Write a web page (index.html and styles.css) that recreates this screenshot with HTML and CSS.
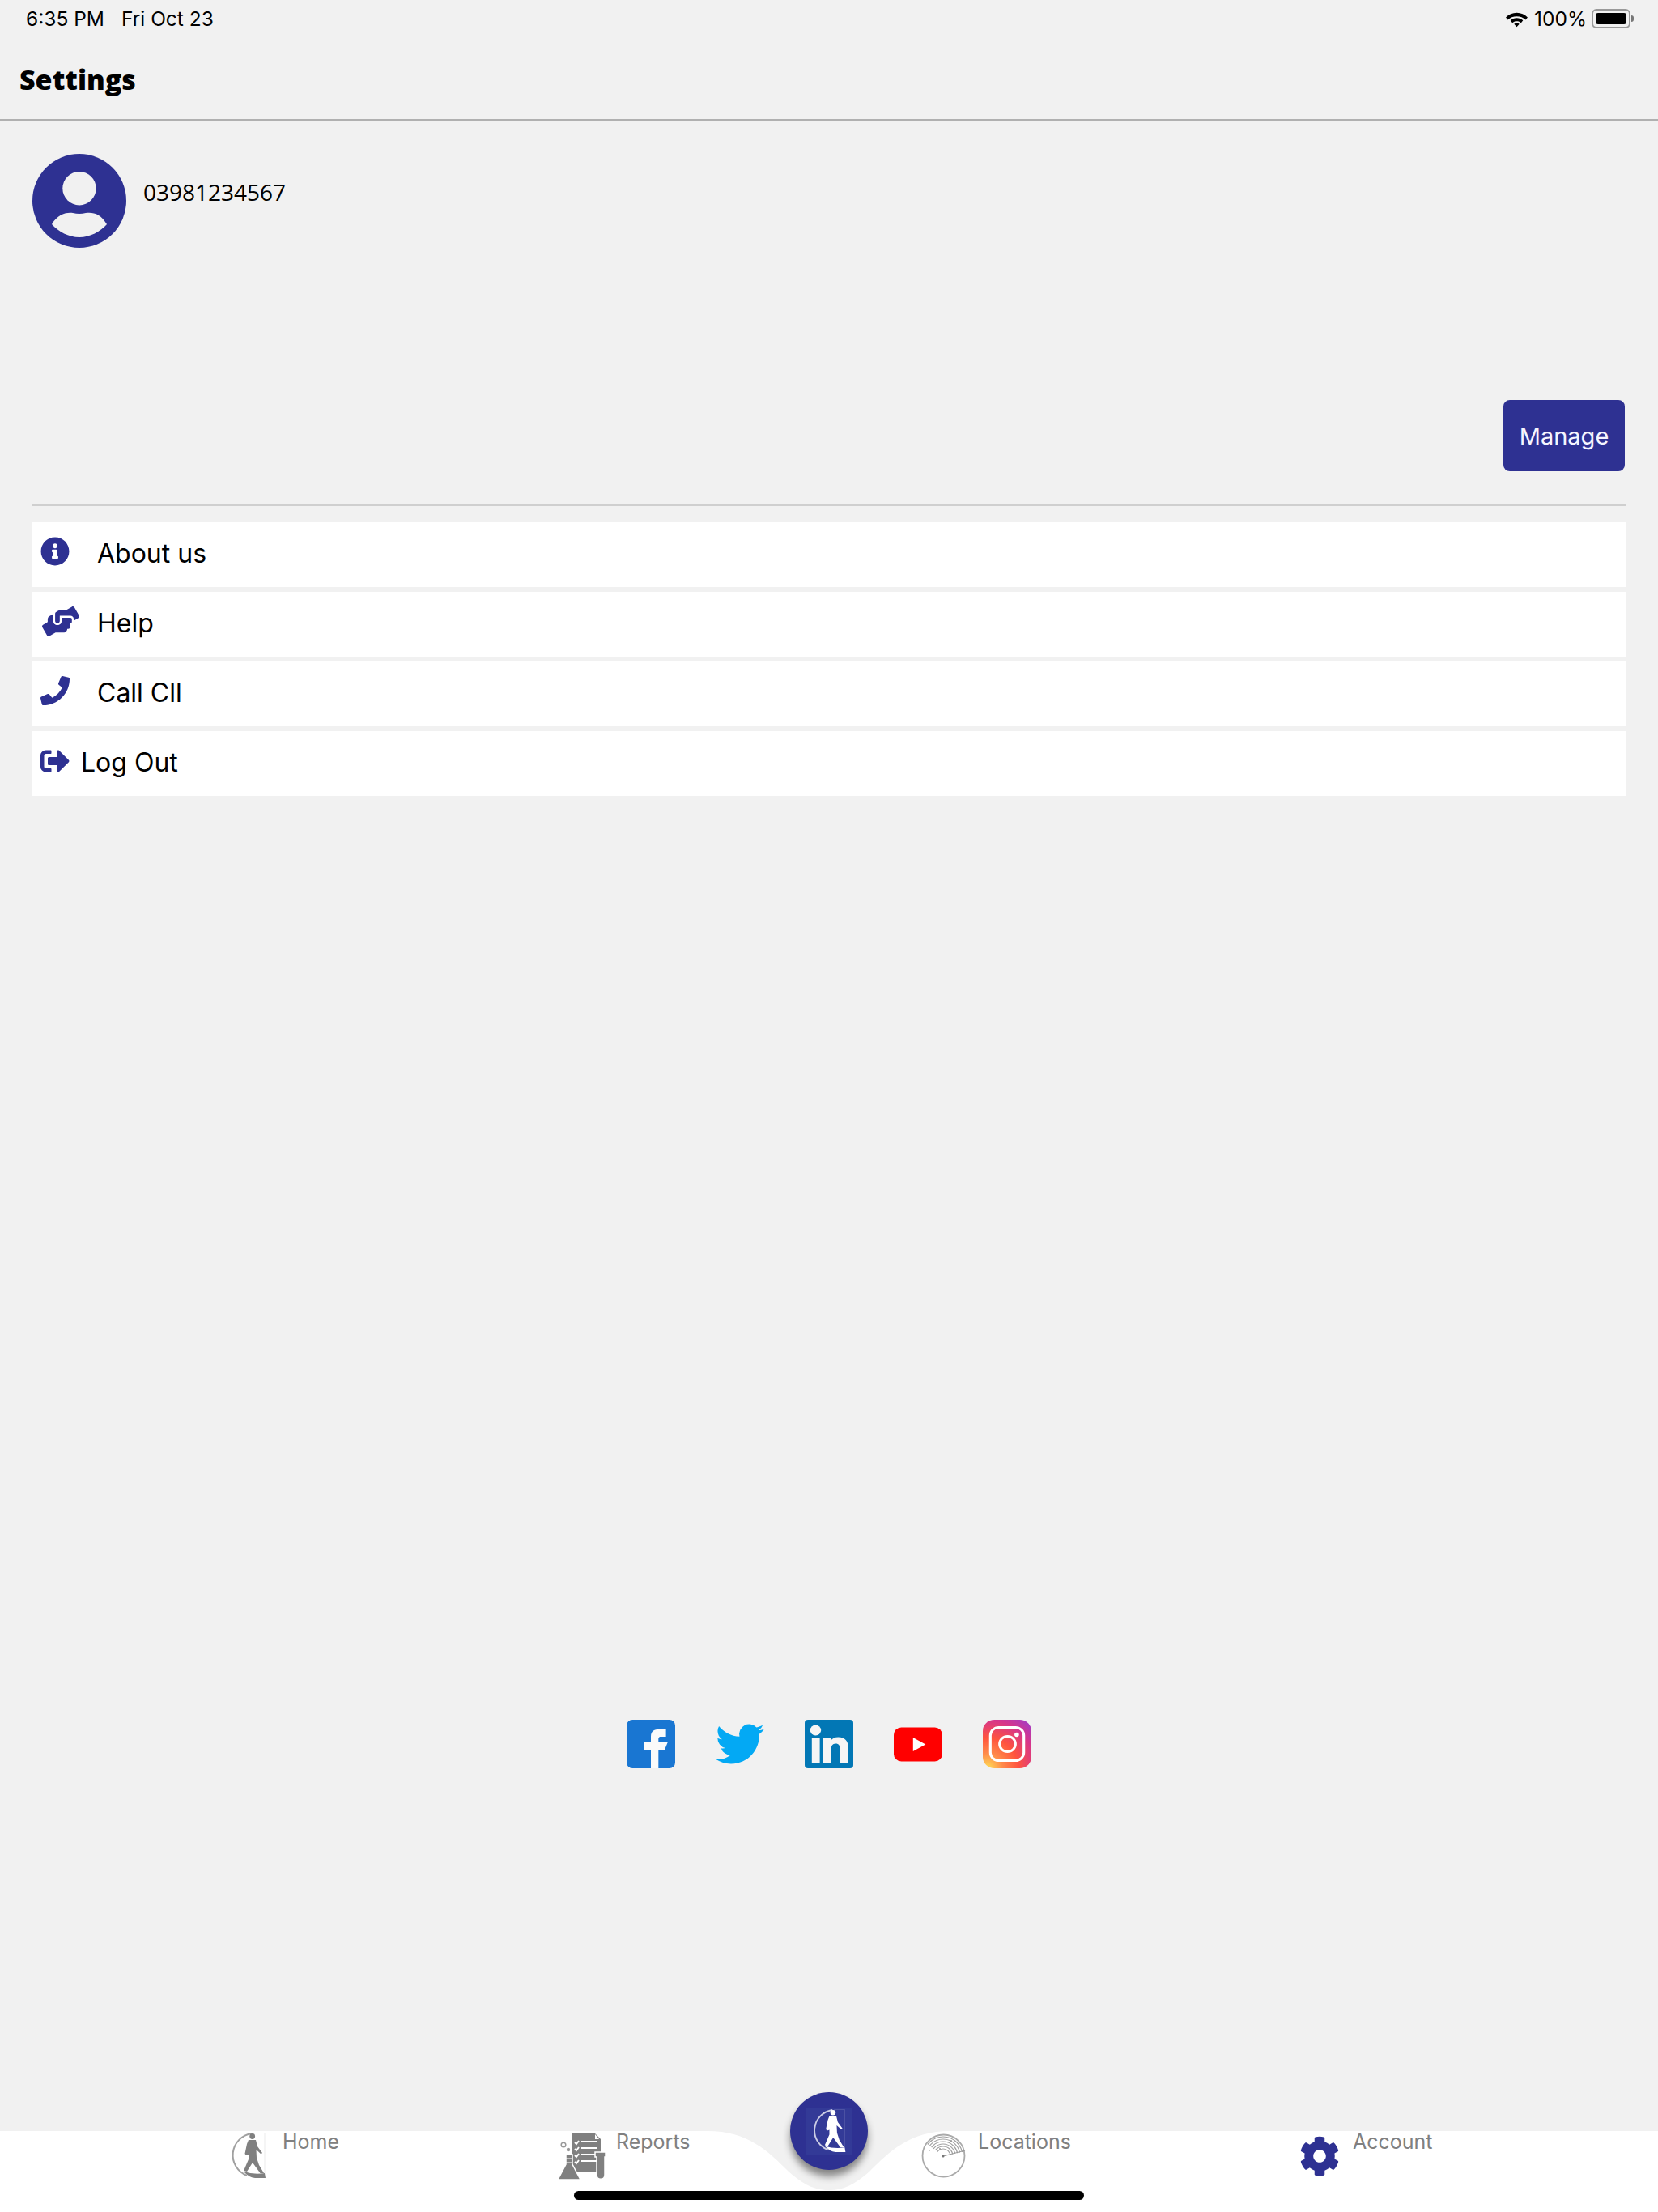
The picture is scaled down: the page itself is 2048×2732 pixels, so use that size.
FILE: index.html
```html
<!DOCTYPE html>
<html lang="en">
<head>
    <meta charset="UTF-8">
    <meta name="viewport" content="width=device-width, initial-scale=1.0">
    <title>Settings</title>
    <link rel="stylesheet" href="styles.css">
</head>
<body>
    <!-- walker logo, used in the tab bar and the round button -->
    <svg class="defs" width="0" height="0">
        <symbol id="walker" viewBox="0 0 43 57">
            <path d="M28 .5 H42 V50" fill="none" stroke="currentColor" stroke-opacity="0.15" stroke-width="1"/>
            <path d="M26 1 A27 27 0 0 0 20 53" fill="none" stroke="currentColor" stroke-opacity="0.75" stroke-width="2"/>
            <circle cx="26.700" cy="4.500" r="3.400" fill="currentColor"/>
            <path fill="currentColor" d="M22 9 L31 9 L33 17 L39 25 L37.500 26.500 L31.500 21 L32 31 L35 40 L41 50 L36.500 50 L27 37 L20 48 L16 47 L22 33 L22 27 L19 28 L17.500 26 L20 14 Z"/>
            <path fill="currentColor" d="M16 48 Q28 52 42 50 L43 56 L30 56 Q22 55 16 48 Z"/>
        </symbol>
    </svg>

    <div class="status-bar">
        <div class="status-left"><span>6:35 PM</span><span>Fri Oct 23</span></div>
        <div class="status-right">
            <svg class="wifi" viewBox="0 0 28 20"><path d="M14 2.500 C19 2.500 23.500 4.500 27 8 L24.600 11 C22 8.200 18 6.800 14 6.800 C10 6.800 6 8.200 3.400 11 L1 8 C4.500 4.500 9 2.500 14 2.500 Z M14 8.800 C16.800 8.800 19.500 9.800 21.500 11.800 L19.200 14.600 C17.800 13.200 16 12.600 14 12.600 C12 12.600 10.200 13.200 8.800 14.600 L6.500 11.800 C8.500 9.800 11.200 8.800 14 8.800 Z M14 14.800 C15.200 14.800 16.300 15.200 17.100 16 L14 19.500 L10.900 16 C11.700 15.200 12.800 14.800 14 14.800 Z"/></svg>
            <span>100%</span>
            <div class="battery"><div class="battery-fill"></div></div>
            <div class="battery-cap"></div>
        </div>
    </div>

    <header class="page-header">
        <h1>Settings</h1>
    </header>

    <main class="content">
        <div class="profile">
            <svg class="avatar" viewBox="0 0 116 116">
                <circle cx="58" cy="58" r="58" fill="#2e3192"/>
                <circle cx="58" cy="42.700" r="20.700" fill="#f1f1f1"/>
                <path fill="#f1f1f1" d="M24 87 C32 73 44 72 50 73 Q58 75 66 73 C76 72 84 74 92 87 C84 96 71 103 58 103 C45 103 32 96 24 87 Z"/>
            </svg>
            <div class="phone">03981234567</div>
        </div>
        <div class="manage-row">
            <button class="manage">Manage</button>
        </div>
        <div class="menu">
            <div class="menu-row">
                <div class="menu-icon">
                    <svg class="icon-info" viewBox="0 0 512 512"><path d="M256 8C119.043 8 8 119.083 8 256c0 136.997 111.043 248 248 248s248-111.003 248-248C504 119.083 392.957 8 256 8zm0 110c23.196 0 42 18.804 42 42s-18.804 42-42 42-42-18.804-42-42 18.804-42 42-42zm56 254c0 6.627-5.373 12-12 12h-88c-6.627 0-12-5.373-12-12v-24c0-6.627 5.373-12 12-12h12v-64h-12c-6.627 0-12-5.373-12-12v-24c0-6.627 5.373-12 12-12h64c6.627 0 12 5.373 12 12v100h12c6.627 0 12 5.373 12 12v24z"/></svg>
                </div>
                <span>About us</span>
            </div>
            <div class="menu-row">
                <div class="menu-icon">
                    <svg class="icon-help" viewBox="0 0 640 512"><path d="M488 192H336v56c0 39.700-32.300 72-72 72s-72-32.300-72-72V126.400l-64.900 39C107.800 176.900 96 197.800 96 220.200v47.300l-80 46.200C.7 322.500-4.600 342.100 4.300 357.400l80 138.600c8.800 15.300 28.400 20.500 43.700 11.700L231.400 448H368c35.300 0 64-28.700 64-64h16c17.700 0 32-14.300 32-32v-64h8c13.300 0 24-10.700 24-24v-48c0-13.300-10.700-24-24-24zm147.700-37.400L555.700 16C546.900.7 527.300-4.500 512 4.300L408.600 64H306.400c-12 0-23.700 3.400-34 9.700l-33.500 20.900c-9.400 5.900-15 16.200-15 27.300V248c0 22.100 17.900 40 40 40s40-17.900 40-40v-88h184c30.900 0 56 25.100 56 56v28.500l80-46.200c15.300-8.900 20.500-28.400 11.700-43.700z"/></svg>
                </div>
                <span>Help</span>
            </div>
            <div class="menu-row">
                <div class="menu-icon">
                    <svg class="icon-call" viewBox="0 0 512 512"><path d="M493.400 24.600l-104-24c-11.300-2.600-22.900 3.300-27.500 13.900l-48 112c-4.200 9.800-1.400 21.300 6.900 28l60.600 49.600c-36 76.700-98.900 140.500-177.200 177.200l-49.600-60.600c-6.800-8.300-18.200-11.100-28-6.900l-112 48C3.900 366.500-2 378.100.6 389.400l24 104C27.100 504.200 36.700 512 48 512c256.100 0 464-207.500 464-464 0-11.200-7.700-20.900-18.600-23.400z"/></svg>
                </div>
                <span>Call Cll</span>
            </div>
            <div class="menu-row">
                <div class="menu-icon menu-icon-short">
                    <svg class="icon-logout" viewBox="0 0 512 512"><path d="M497 273L329 441c-15 15-41 4.500-41-17v-96H152c-13.300 0-24-10.700-24-24v-96c0-13.300 10.700-24 24-24h136V88c0-21.400 25.900-32 41-17l168 168c9.300 9.400 9.300 24.600 0 34zM192 436v-40c0-6.600-5.400-12-12-12H96c-17.700 0-32-14.300-32-32V160c0-17.700 14.300-32 32-32h84c6.600 0 12-5.400 12-12V76c0-6.600-5.400-12-12-12H96c-53 0-96 43-96 96v192c0 53 43 96 96 96h84c6.600 0 12-5.400 12-12z"/></svg>
                </div>
                <span>Log Out</span>
            </div>
        </div>

        <div class="social">
            <svg class="social-icon" viewBox="0 0 58 60" preserveAspectRatio="none">
                <rect width="58" height="60" rx="7" fill="#1976d2"/>
                <path fill="#fafafa" d="M29 60 V38 H21 V28 H29 V21 C29 13 34 12 38 12 H47 V21 H41 C38 21 38 23 38 25 V28 H49 L45 38 H38 V60 Z"/>
            </svg>
            <svg class="social-icon" viewBox="0 0 24 24">
                <path fill="#03a9f4" d="M23.953 4.570a10 10 0 01-2.825.775 4.958 4.958 0 002.163-2.723c-.951.555-2.005.959-3.127 1.184a4.920 4.920 0 00-8.384 4.482C7.690 8.095 4.067 6.130 1.640 3.162a4.822 4.822 0 00-.666 2.475c0 1.710.870 3.213 2.188 4.096a4.904 4.904 0 01-2.228-.616v.060a4.923 4.923 0 003.946 4.827 4.996 4.996 0 01-2.212.085 4.936 4.936 0 004.604 3.417 9.867 9.867 0 01-6.102 2.105c-.390 0-.779-.023-1.170-.067a13.995 13.995 0 007.557 2.209c9.053 0 13.998-7.496 13.998-13.985 0-.210 0-.420-.015-.630A9.935 9.935 0 0024 4.590z"/>
            </svg>
            <svg class="social-icon" viewBox="0 0 58 60" preserveAspectRatio="none">
                <rect width="58" height="60" rx="4" fill="#0277b5"/>
                <circle cx="13" cy="13" r="6.500" fill="#f5f5f5"/>
                <rect x="8.500" y="22" width="9.500" height="32" rx="1" fill="#f5f5f5"/>
                <path fill="#f5f5f5" d="M22 22 H31 V26 C33 23 36 21.500 40 21.500 C48 21.500 52 26 52 35 V54 H42.500 V37 C42.500 32 40.500 29.500 37 29.500 C33 29.500 31.500 32.500 31.500 37 V54 H22 Z"/>
            </svg>
            <svg class="social-icon" viewBox="0 0 58 60" preserveAspectRatio="none">
                <rect x="0" y="9.500" width="58" height="42" rx="9" fill="#ff0000"/>
                <path fill="#fff" d="M23 22 L38 30.500 L23 39 Z"/>
            </svg>
            <svg class="social-icon" viewBox="0 0 58 60" preserveAspectRatio="none">
                <defs>
                    <radialGradient id="insta" cx="0.1" cy="1" r="1.250">
                        <stop offset="0" stop-color="#ffdd55"/>
                        <stop offset="0.250" stop-color="#ff8a4a"/>
                        <stop offset="0.500" stop-color="#ff543e"/>
                        <stop offset="0.800" stop-color="#d6358c"/>
                        <stop offset="1" stop-color="#a83bc0"/>
                    </radialGradient>
                </defs>
                <rect width="58" height="60" rx="14" fill="url(#insta)"/>
                <rect x="9" y="9.500" width="40" height="41" rx="10" fill="none" stroke="#fff" stroke-width="3"/>
                <circle cx="29.500" cy="30" r="9.500" fill="none" stroke="#fff" stroke-width="3"/>
                <circle cx="40.500" cy="18.500" r="2.700" fill="#fff"/>
            </svg>
        </div>
    </main>

    <nav class="tab-bar">
        <svg class="notch" viewBox="0 0 300 73"><path d="M0 0 C50 0 75 25 100 50 C118 66 132 73 150 73 C168 73 182 66 200 50 C225 25 250 0 300 0 Z"/></svg>
        <div class="tab">
            <svg class="tab-home"><use href="#walker"/></svg>
            <span>Home</span>
        </div>
        <div class="tab">
            <svg class="tab-reports" viewBox="0 0 58 58">
                <path fill="#808080" d="M16 0 H44 L52 8 V49 H16 Z"/>
                <path fill="#fff" d="M45 2 L50 8 H45 Z"/>
                <path stroke="#fff" stroke-width="2" fill="none" d="M28 11 H47 M28 19 H47 M28 27 H47 M28 35 H47 M20 12 L22 14 L25 10 M20 20 L22 22 L25 18 M20 28 L22 30 L25 26 M20 36 L22 38 L25 34"/>
                <path fill="#808080" stroke="#fff" stroke-width="1.500" d="M9 27 H17 V39 L27 58 H-1 L9 39 Z"/>
                <path stroke="#fff" stroke-width="1.200" d="M9 32 H17 M9 37 H17"/>
                <circle cx="6" cy="15" r="2.800" fill="none" stroke="#999" stroke-width="1.500"/>
                <circle cx="12" cy="21" r="2.200" fill="#999"/>
                <path fill="#808080" stroke="#fff" stroke-width="1.500" d="M45 24 H58 V30 H57 V52 C57 59 47 59 47 52 V30 H45 Z"/>
            </svg>
            <span>Reports</span>
        </div>
        <div class="tab">
            <svg class="tab-locations" viewBox="0 0 55 55">
                <defs>
                    <clipPath id="sweep"><polygon points="27,28 2,9 10,-5 60,-5 60,21"/></clipPath>
                </defs>
                <circle cx="27.500" cy="27.500" r="26" fill="#fff" stroke="#aaa" stroke-width="1.800"/>
                <g clip-path="url(#sweep)" fill="none" stroke="#a0a0a0" stroke-width="1.200">
                    <circle cx="27" cy="28" r="9"/>
                    <circle cx="27" cy="28" r="12"/>
                    <circle cx="27" cy="28" r="15"/>
                    <circle cx="27" cy="28" r="18"/>
                    <circle cx="27" cy="28" r="21"/>
                    <circle cx="27" cy="28" r="24"/>
                </g>
                <path stroke="#999" stroke-width="1.200" d="M27 28 L54 21"/>
                <circle cx="27" cy="28" r="1.500" fill="#777"/>
                <circle cx="23" cy="19" r="1" fill="#999"/>
                <circle cx="37" cy="9" r="1" fill="#999"/>
                <circle cx="10" cy="21" r="1" fill="#bbb"/>
            </svg>
            <span>Locations</span>
        </div>
        <div class="tab">
            <svg class="tab-account" viewBox="0 0 512 512"><path d="M487.400 315.700l-42.600-24.600c4.300-23.200 4.300-47 0-70.200l42.600-24.600c4.900-2.800 7.100-8.600 5.500-14-11.100-35.600-30-67.800-54.700-94.600-3.800-4.100-10-5.100-14.800-2.300L380.800 110c-17.900-15.400-38.500-27.300-60.800-35.100V25.800c0-5.600-3.900-10.500-9.400-11.700-36.700-8.200-74.300-7.800-109.200 0-5.500 1.200-9.400 6.100-9.400 11.700V75c-22.200 7.900-42.800 19.800-60.800 35.100L88.700 85.500c-4.900-2.800-11-1.900-14.800 2.300-24.700 26.700-43.600 58.900-54.700 94.600-1.700 5.400.6 11.200 5.500 14L67.300 221c-4.300 23.200-4.300 47 0 70.200l-42.600 24.600c-4.900 2.800-7.100 8.600-5.500 14 11.100 35.600 30 67.800 54.700 94.600 3.800 4.100 10 5.100 14.800 2.300l42.600-24.600c17.900 15.400 38.500 27.300 60.800 35.100v49.200c0 5.600 3.900 10.500 9.400 11.700 36.700 8.200 74.300 7.800 109.200 0 5.500-1.200 9.400-6.100 9.400-11.700v-49.200c22.200-7.900 42.800-19.800 60.800-35.100l42.600 24.600c4.900 2.800 11 1.900 14.800-2.300 24.700-26.700 43.600-58.900 54.700-94.600 1.500-5.500-.7-11.300-5.600-14.100zM256 336c-44.100 0-80-35.900-80-80s35.900-80 80-80 80 35.900 80 80-35.900 80-80 80z"/></svg>
            <span>Account</span>
        </div>
        <div class="fab">
            <div class="fab-inner">
                <svg class="fab-icon"><use href="#walker"/></svg>
            </div>
        </div>
        <div class="home-indicator"></div>
    </nav>
</body>
</html>
```

FILE: styles.css
```css
* {
    box-sizing: border-box;
}
body {
    margin: 0;
    height: 2732px;
    display: flex;
    flex-direction: column;
    background: #f1f1f1;
    color: #000;
    font-family: Inter, "Liberation Sans", sans-serif;
}
.defs {
    position: absolute;
}

/* status bar */
.status-bar {
    height: 46px;
    padding: 0 30px 0 32px;
    display: flex;
    justify-content: space-between;
    align-items: center;
    font-size: 24.500px;
}
.status-left {
    display: flex;
    gap: 21px;
}
.status-right {
    display: flex;
    align-items: center;
}
.wifi {
    width: 29px;
    height: 21px;
    margin-right: 7px;
}
.battery {
    width: 48px;
    height: 24px;
    margin-left: 6px;
    padding: 3px;
    border: 2px solid #999;
    border-radius: 6px;
}
.battery-fill {
    height: 100%;
    background: #000;
    border-radius: 3px;
}
.battery-cap {
    width: 3px;
    height: 8px;
    margin-left: 1px;
    background: #777;
    border-radius: 0 3px 3px 0;
}

/* header */
.page-header {
    height: 103px;
    padding: 32px 0 0 24px;
    border-bottom: 2px solid #b0b0b0;
}
.page-header h1 {
    margin: 0;
    font-family: "Open Sans", sans-serif;
    font-size: 34px;
    font-weight: 800;
    line-height: 40px;
}

/* main */
.content {
    flex: 1;
    padding: 41px 40px 0;
    display: flex;
    flex-direction: column;
}
.profile {
    display: flex;
    gap: 21px;
}
.avatar {
    width: 116px;
    height: 116px;
}
.phone {
    margin-top: 28px;
    font-family: "Open Sans", sans-serif;
    font-size: 28px;
    line-height: 38px;
}
.manage-row {
    margin-top: 188px;
    padding-bottom: 41px;
    display: flex;
    justify-content: flex-end;
    border-bottom: 2px solid #cfcfcf;
}
.manage {
    width: 150px;
    height: 88px;
    margin-right: 1px;
    border: none;
    border-radius: 8px;
    background: #2e3192;
    color: #f5f5ff;
    font-family: Inter, sans-serif;
    font-size: 29px;
}
.menu {
    margin-top: 20px;
    display: flex;
    flex-direction: column;
    gap: 6px;
}
.menu-row {
    height: 80px;
    padding: 0 0 4px 10px;
    display: flex;
    align-items: center;
    background: #fff;
    font-size: 32px;
}
.menu-icon {
    width: 70px;
    display: flex;
    align-items: center;
    padding-bottom: 4px;
}
.menu-icon-short {
    width: 50px;
    padding-bottom: 2px;
}
.menu-icon svg {
    fill: #2e3192;
    display: block;
}
.icon-info,
.icon-call,
.icon-logout {
    width: 36px;
    height: 36px;
}
.icon-help {
    width: 46px;
    height: 37px;
    margin-left: 2px;
}

/* social links */
.social {
    margin-top: auto;
    margin-bottom: 448px;
    display: flex;
    justify-content: center;
    gap: 50px;
}
.social-icon {
    width: 60px;
    height: 60px;
}

/* tab bar */
.tab-bar {
    position: relative;
    height: 100px;
    padding-left: 285px;
    display: grid;
    grid-template-columns: 405px 448px 467px 1fr;
    background: #fff;
    color: #808080;
    font-size: 25px;
}
.tab {
    display: flex;
    align-items: flex-start;
    line-height: 26px;
}
.tab-home {
    width: 43px;
    height: 57px;
    margin: 2px 21px 0 0;
    color: #808080;
}
.tab-reports {
    width: 58px;
    height: 58px;
    margin: 2px 13px 0 0;
}
.tab-locations {
    width: 55px;
    height: 55px;
    margin: 3px 15px 0 0;
}
.tab-account {
    width: 50px;
    height: 50px;
    margin: 6px 16px 0 0;
    fill: #2e3192;
}
.notch {
    position: absolute;
    left: 874px;
    top: 0;
    width: 300px;
    height: 73px;
    fill: #f1f1f1;
}
.fab {
    position: absolute;
    left: 976px;
    top: -48px;
    width: 96px;
    height: 96px;
    display: flex;
    align-items: center;
    justify-content: center;
    border-radius: 50%;
    background: #2e3192;
    box-shadow: 0 8px 10px rgba(0, 0, 0, 0.45);
}
.fab-inner {
    width: 58px;
    height: 58px;
    display: flex;
    align-items: center;
    justify-content: center;
    background: #333a97;
}
.fab-icon {
    width: 42px;
    height: 54px;
    color: #fff;
}
.home-indicator {
    position: absolute;
    left: 709px;
    top: 74px;
    width: 630px;
    height: 11px;
    border-radius: 6px;
    background: #000;
}
```
